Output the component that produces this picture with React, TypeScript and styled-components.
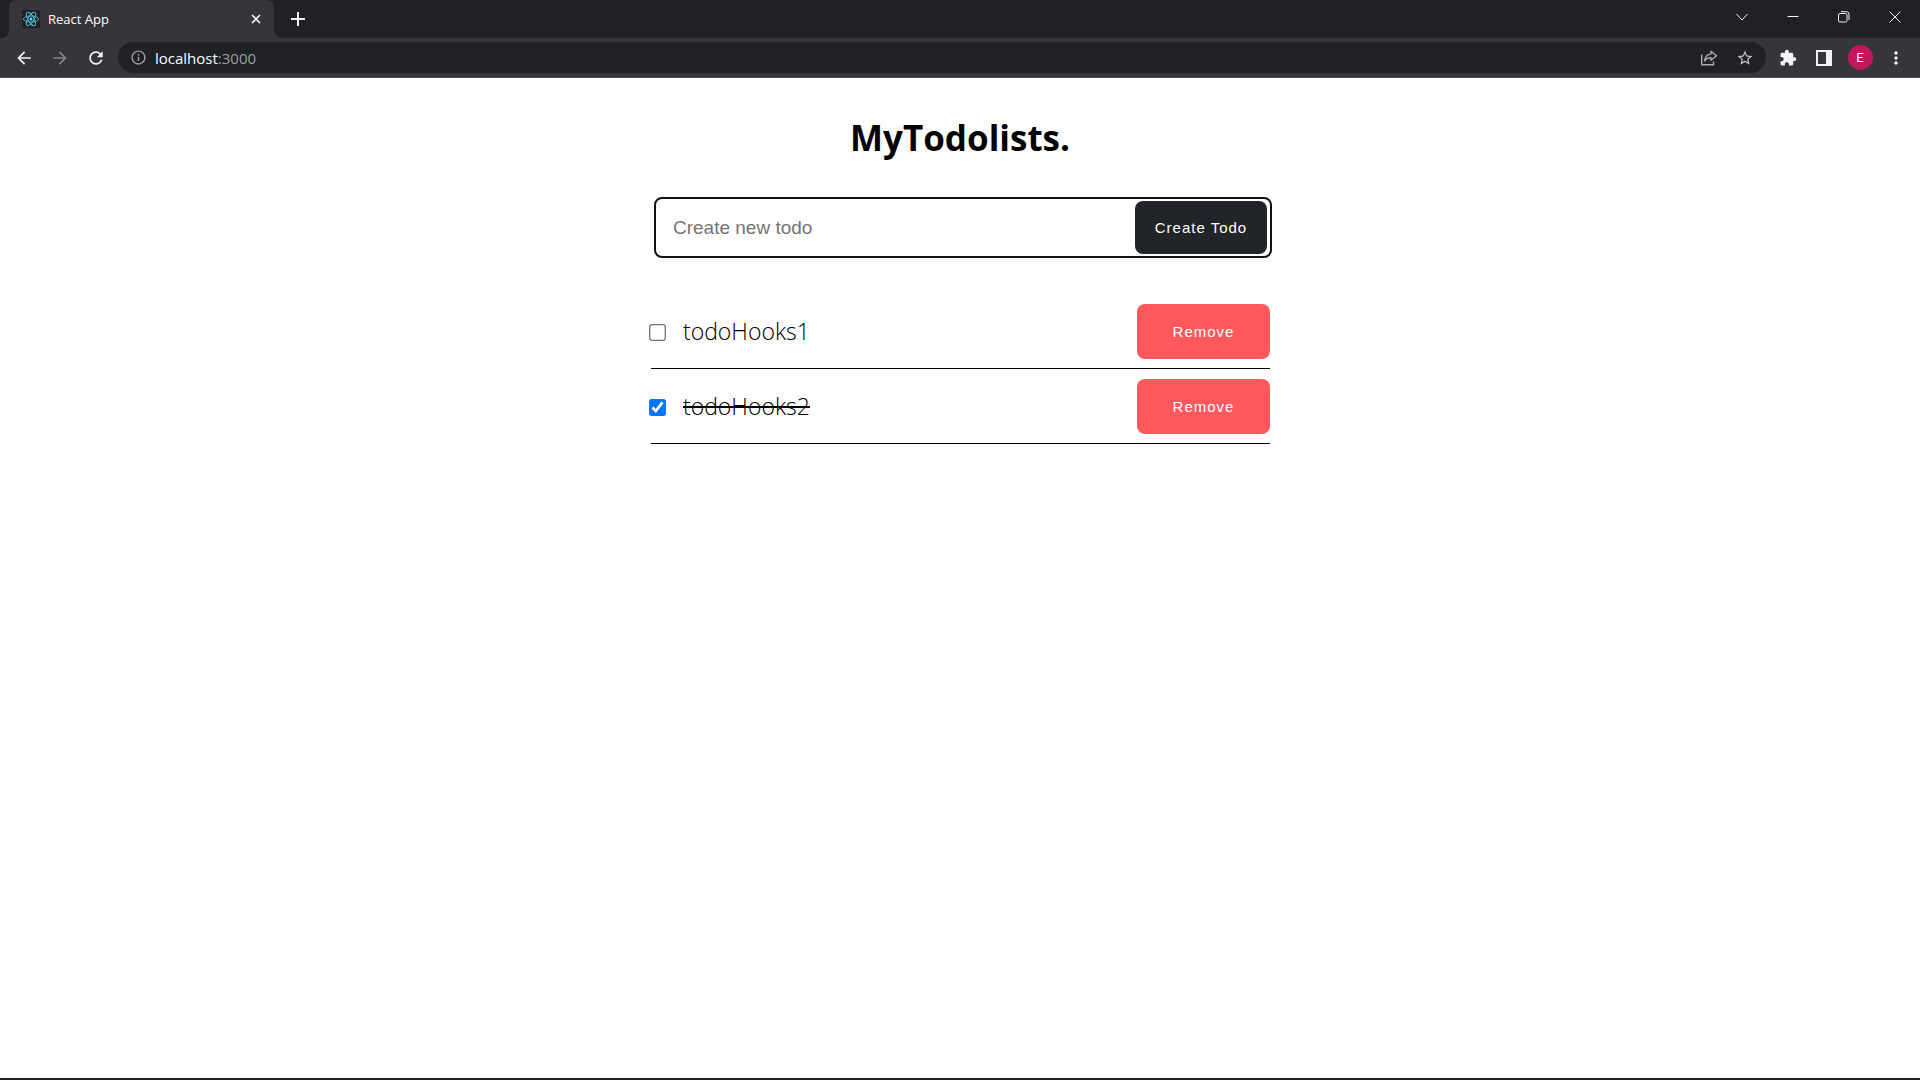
import React, { useState } from "react";
import styled, { createGlobalStyle } from "styled-components";

const GlobalStyle = createGlobalStyle`
  *, *::before, *::after { box-sizing: border-box; }
  body {
    margin: 0;
    background: #fff;
    color: #000;
    font-family: "Open Sans", "Noto Sans", sans-serif;
  }
  button, input { font: inherit; }
`;

const Shell = styled.div`
  min-height: 100vh;
  display: flex;
  flex-direction: column;
`;

/* ---------- browser frame ---------- */

const TitleBar = styled.header`
  display: flex;
  align-items: stretch;
  height: 38px;
  padding-left: 9px;
  background: #202124;
`;

const Tab = styled.div`
  position: relative;
  display: flex;
  align-items: center;
  width: 265px;
  padding: 0 10px 0 13px;
  border-radius: 8px 8px 0 0;
  background: #35363a;
  color: #fff;
  font-size: 13px;
  line-height: 16px;

  &::before,
  &::after {
    content: "";
    position: absolute;
    bottom: 0;
    width: 8px;
    height: 8px;
  }
  &::before {
    right: 100%;
    background: radial-gradient(circle at 0 0, #202124 8px, #35363a 8px);
  }
  &::after {
    left: 100%;
    background: radial-gradient(circle at 100% 0, #202124 8px, #35363a 8px);
  }
`;

const TabTitle = styled.span`
  flex: 1;
  margin-left: 8px;
`;

const IconButton = styled.button<{ $w?: number; $color?: string }>`
  display: flex;
  align-items: center;
  justify-content: center;
  flex: none;
  width: ${(p) => p.$w ?? 36}px;
  height: 100%;
  padding: 0;
  border: 0;
  background: none;
  color: ${(p) => p.$color ?? "#f1f3f4"};
`;

const WindowControls = styled.div`
  display: flex;
  height: 34px;
  margin-left: auto;
`;

const Toolbar = styled.nav`
  display: flex;
  align-items: center;
  height: 40px;
  padding: 0 6px;
  border-bottom: 1px solid #505154;
  background: #35363a;
`;

const AddressBar = styled.div`
  display: flex;
  align-items: center;
  flex: 1;
  height: 31px;
  margin: 0 4px;
  padding: 0 3px 0 12px;
  border-radius: 16px;
  background: #202124;
  color: #9aa0a6;
`;

const Url = styled.a`
  flex: 1;
  margin-left: 8px;
  color: #9aa0a6;
  font-size: 15px;
  line-height: 20px;
  text-decoration: none;

  b { color: #fff; font-weight: 400; }
`;

const Avatar = styled.span`
  display: grid;
  place-items: center;
  width: 25px;
  height: 25px;
  border-radius: 50%;
  background: #c2185b;
  color: #fff;
  font: 13px/16px Roboto, sans-serif;
`;

const Taskbar = styled.footer`
  height: 2px;
  background: #202124;
`;

/* ---------- page ---------- */

const Page = styled.main`
  flex: 1;
  padding: 36px 16px;
`;

const Heading = styled.h1`
  margin: 0;
  font-size: 35px;
  line-height: 48px;
  font-weight: 700;
  text-align: center;
`;

const FormWrap = styled.div`
  max-width: 624px;
  margin: 35px auto 0;
  padding-left: 6px;
`;

const Form = styled.form`
  display: flex;
  height: 61px;
  padding: 2px 3px 2px 2px;
  border: 2px solid #111214;
  border-radius: 8px;
  font-family: "Liberation Sans", Arial, sans-serif;
`;

const TodoInput = styled.input`
  flex: 1;
  min-width: 0;
  padding: 0 15px;
  border: 0;
  outline: 0;
  background: none;
  font-size: 19px;

  &::placeholder { color: #757575; opacity: 1; }
`;

const Button = styled.button<{ $bg: string; $w: number; $h: number }>`
  flex: none;
  width: ${(p) => p.$w}px;
  height: ${(p) => p.$h}px;
  padding: 0;
  border: 0;
  border-radius: 8px;
  background: ${(p) => p.$bg};
  color: #fff;
  font-family: "Liberation Sans", Arial, sans-serif;
  font-size: 15px;
  font-weight: 500;
  letter-spacing: 1px;
`;

const List = styled.ul`
  max-width: 620px;
  margin: 36px auto 0;
  padding: 0 0 0 1px;
  list-style: none;
`;

const Item = styled.li`
  display: flex;
  align-items: center;
  justify-content: space-between;
  height: 75px;
  border-bottom: 1px solid #000;
`;

const Label = styled.label<{ $done: boolean }>`
  display: flex;
  align-items: center;
  gap: 19px;
  font-size: 23px;
  line-height: 30px;
  font-weight: 300;
  text-decoration: ${(p) => (p.$done ? "line-through 2px" : "none")};
`;

const Check = styled.input`
  width: 13px;
  height: 13px;
  margin: 2px 0 0;
  transform: scale(1.3);
`;

/* ---------- icons ---------- */

const Glyph = ({ d, size = 20 }: { d: string; size?: number }) => (
  <svg width={size} height={size} viewBox="0 0 24 24" fill="currentColor" aria-hidden="true">
    <path d={d} />
  </svg>
);

const Line = ({ d, size = 12, w = 1 }: { d: string; size?: number; w?: number }) => (
  <svg width={size} height={size} viewBox="0 0 12 12" fill="none" stroke="currentColor" strokeWidth={w} aria-hidden="true">
    <path d={d} />
  </svg>
);

const paths = {
  back: "M20 11H7.83l5.59-5.59L12 4l-8 8 8 8 1.41-1.41L7.83 13H20v-2z",
  forward: "M12 4l-1.41 1.41L16.17 11H4v2h12.17l-5.58 5.59L12 20l8-8z",
  reload:
    "M17.65 6.35C16.2 4.9 14.21 4 12 4c-4.42 0-7.99 3.58-7.99 8s3.57 8 7.99 8c3.73 0 6.84-2.55 7.73-6h-2.08c-.82 2.33-3.04 4-5.65 4-3.31 0-6-2.69-6-6s2.69-6 6-6c1.66 0 3.14.69 4.22 1.78L13 11h7V4l-2.35 2.35z",
  info: "M11 7h2v2h-2zm0 4h2v6h-2zm1-9C6.48 2 2 6.48 2 12s4.48 10 10 10 10-4.48 10-10S17.52 2 12 2zm0 18c-4.41 0-8-3.59-8-8s3.59-8 8-8 8 3.59 8 8-3.59 8-8 8z",
  star: "M22 9.24l-7.19-.62L12 2 9.19 8.63 2 9.24l5.46 4.73L5.82 21 12 17.27 18.18 21l-1.63-7.03L22 9.24zM12 15.4l-3.76 2.27 1-4.28-3.32-2.88 4.38-.38L12 6.1l1.71 4.04 4.38.38-3.32 2.88 1 4.28L12 15.4z",
  puzzle:
    "M20.500 11H19V7c0-1.100-.900-2-2-2h-4V3.500C13 2.120 11.880 1 10.500 1S8 2.120 8 3.500V5H4c-1.100 0-1.990.900-1.990 2v3.800H3.500c1.490 0 2.700 1.210 2.700 2.700s-1.210 2.700-2.700 2.700H2V20c0 1.100.900 2 2 2h3.800v-1.500c0-1.490 1.210-2.700 2.700-2.700s2.700 1.210 2.700 2.700V22H17c1.100 0 2-.900 2-2v-4h1.500c1.380 0 2.500-1.120 2.500-2.500S21.880 11 20.500 11z",
  dots: "M12 8c1.100 0 2-.900 2-2s-.900-2-2-2-2 .900-2 2 .900 2 2 2zm0 2c-1.100 0-2 .900-2 2s.900 2 2 2 2-.900 2-2-.900-2-2-2zm0 6c-1.100 0-2 .900-2 2s.900 2 2 2 2-.900 2-2-.900-2-2-2z",
};

const ReactLogo = () => (
  <svg width="18" height="18" viewBox="0 0 18 18" aria-hidden="true">
    <rect width="18" height="18" rx="2" fill="#222" />
    <g fill="none" stroke="#53b9d6" strokeWidth="0.9">
      <ellipse cx="9" cy="9" rx="7.600" ry="3" />
      <ellipse cx="9" cy="9" rx="7.600" ry="3" transform="rotate(60 9 9)" />
      <ellipse cx="9" cy="9" rx="7.600" ry="3" transform="rotate(120 9 9)" />
    </g>
    <circle cx="9" cy="9" r="1.500" fill="#61dafb" />
  </svg>
);

const ShareIcon = () => (
  <svg width="18" height="18" viewBox="0 0 18 18" fill="none" stroke="currentColor" strokeWidth="1.400" aria-hidden="true">
    <path d="M1.700 5.500V15.800H13.500V12.500" />
    <path d="M11 2.300L16.500 6.800L11 11.300V8.800C8 8.800 6 9.800 4.600 12C5 8.200 7.200 5.400 11 4.900Z" strokeLinejoin="round" />
  </svg>
);

const SidePanelIcon = () => (
  <svg width="16" height="16" viewBox="0 0 16 16" aria-hidden="true">
    <path d="M0 0H16V16H0ZM2 2V14H10V2Z" fill="currentColor" fillRule="evenodd" />
  </svg>
);

const RestoreIcon = () => (
  <svg width="12" height="12" viewBox="0 0 12 12" fill="none" stroke="currentColor" aria-hidden="true">
    <rect x="0.500" y="2.500" width="8.500" height="8.500" rx="1.500" />
    <path d="M3 0.700H8.500Q11 0.700 11 3.200V9" />
  </svg>
);

/* ---------- app ---------- */

export default function App() {
  const [text, setText] = useState("");
  const [todos, setTodos] = useState([
    { id: 1, title: "todoHooks1", done: false },
    { id: 2, title: "todoHooks2", done: true },
  ]);

  const create = (e: React.FormEvent) => {
    e.preventDefault();
    if (!text.trim()) return;
    setTodos([...todos, { id: Date.now(), title: text, done: false }]);
    setText("");
  };
  const toggle = (id: number) =>
    setTodos(todos.map((t) => (t.id === id ? { ...t, done: !t.done } : t)));
  const remove = (id: number) => setTodos(todos.filter((t) => t.id !== id));

  return (
    <Shell>
      <GlobalStyle />
      <TitleBar>
        <Tab>
          <ReactLogo />
          <TabTitle>React App</TabTitle>
          <IconButton $w={16} aria-label="Close tab">
            <Line d="M2 2L10 10M10 2L2 10" w={1.7} />
          </IconButton>
        </Tab>
        <IconButton $w={48} aria-label="New tab">
          <Line d="M6 0V12M0 6H12" size={14} w={1.7} />
        </IconButton>
        <WindowControls>
          <IconButton $w={51} aria-label="Search tabs">
            <Line d="M0.500 3L6 9L11.500 3" />
          </IconButton>
          <IconButton $w={51} aria-label="Minimize">
            <Line d="M0.500 5.500H11.500" />
          </IconButton>
          <IconButton $w={51} aria-label="Restore">
            <RestoreIcon />
          </IconButton>
          <IconButton $w={51} aria-label="Close window">
            <Line d="M0.500 0.500L11.500 11.500M11.500 0.500L0.500 11.500" />
          </IconButton>
        </WindowControls>
      </TitleBar>
      <Toolbar>
        <IconButton aria-label="Back"><Glyph d={paths.back} /></IconButton>
        <IconButton aria-label="Forward" $color="#85868a"><Glyph d={paths.forward} /></IconButton>
        <IconButton aria-label="Reload"><Glyph d={paths.reload} /></IconButton>
        <AddressBar>
          <Glyph d={paths.info} size={17} />
          <Url href="#"><b>localhost</b>:3000</Url>
          <IconButton aria-label="Share" $color="#a9acb0"><ShareIcon /></IconButton>
          <IconButton aria-label="Bookmark" $color="#c4c7ca"><Glyph d={paths.star} size={18} /></IconButton>
        </AddressBar>
        <IconButton aria-label="Extensions"><Glyph d={paths.puzzle} size={18} /></IconButton>
        <IconButton aria-label="Side panel"><SidePanelIcon /></IconButton>
        <IconButton aria-label="Profile"><Avatar>E</Avatar></IconButton>
        <IconButton aria-label="Menu"><Glyph d={paths.dots} /></IconButton>
      </Toolbar>
      <Page>
        <Heading>MyTodolists.</Heading>
        <FormWrap>
          <Form onSubmit={create}>
            <TodoInput
              aria-label="Create new todo"
              placeholder="Create new todo"
              value={text}
              onChange={(e) => setText(e.target.value)}
            />
            <Button $bg="#212429" $w={132} $h={53}>Create Todo</Button>
          </Form>
        </FormWrap>
        <List>
          {todos.map((t) => (
            <Item key={t.id}>
              <Label $done={t.done}>
                <Check type="checkbox" checked={t.done} onChange={() => toggle(t.id)} />
                {t.title}
              </Label>
              <Button type="button" $bg="#ff595e" $w={133} $h={55} onClick={() => remove(t.id)}>
                Remove
              </Button>
            </Item>
          ))}
        </List>
      </Page>
      <Taskbar />
    </Shell>
  );
}
